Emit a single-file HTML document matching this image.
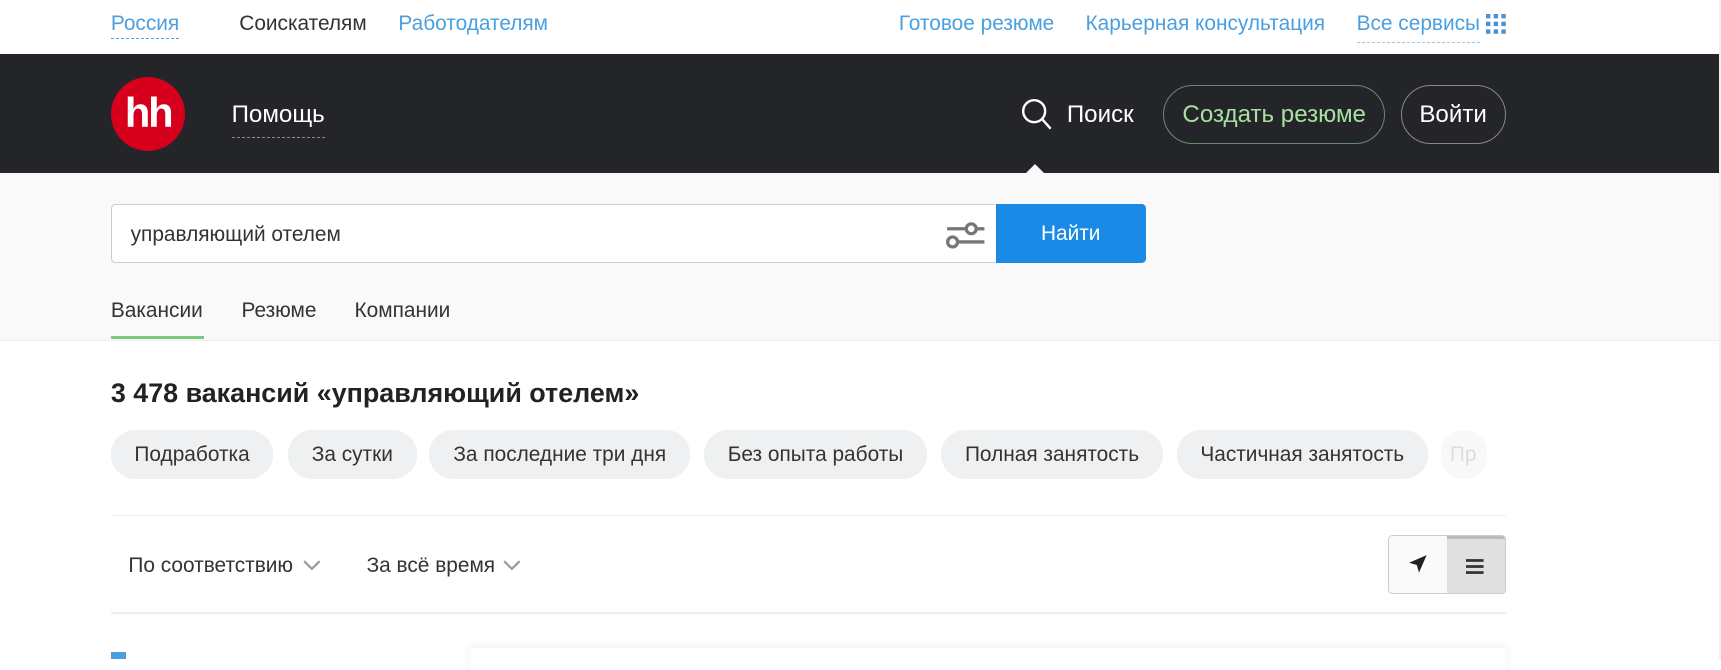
<!DOCTYPE html>
<html><head><meta charset="utf-8">
<style>
html,body{margin:0;padding:0;}
body{width:1568px;height:600px;overflow:hidden;zoom:1.09758;font-family:"Liberation Sans",Arial,sans-serif;background:#fff;position:relative;}
.a{position:absolute;white-space:nowrap;}
.top{font-size:19px;top:11px;}
.blue{color:#4a9fe0;}
.dash{border-bottom:1px dashed #4a9fe0;padding-bottom:3px;}
.hdr{position:absolute;left:0;top:49px;width:1566px;height:109px;background:#232529;}
.srch{position:absolute;left:0;top:158px;width:1566px;height:152px;background:#f9f9f9;border-bottom:1px solid #eee;}
.chip{position:absolute;top:392px;height:44px;line-height:45px;border-radius:22px;background:#eef0f2;font-size:19px;color:#333;text-align:center;}
.btn{position:absolute;top:77px;height:52px;border-radius:27px;font-size:22px;line-height:53px;text-align:center;}
</style></head><body>
<div class="a top blue" style="left:101px"><span class="dash">Россия</span></div>
<div class="a top" style="left:218px;color:#333">Соискателям</div>
<div class="a top blue" style="left:363px">Работодателям</div>
<div class="a top blue" style="left:819px">Готовое резюме</div>
<div class="a top blue" style="left:989px">Карьерная консультация</div>
<div class="a top blue" style="left:1236px"><span style="border-bottom:1px dashed #9cc4e8;padding-bottom:6px">Все сервисы</span></div>
<svg class="a" style="left:1354px;top:13px" width="18" height="18"><g fill="#4a8fd0"><rect x="0" y="0" width="4" height="4"/><rect x="7" y="0" width="4" height="4"/><rect x="14" y="0" width="4" height="4"/><rect x="0" y="7" width="4" height="4"/><rect x="7" y="7" width="4" height="4"/><rect x="14" y="7" width="4" height="4"/><rect x="0" y="14" width="4" height="4"/><rect x="7" y="14" width="4" height="4"/><rect x="14" y="14" width="4" height="4"/></g></svg>

<div class="hdr"></div>
<div class="a" style="left:101px;top:70px;width:68px;height:68px;border-radius:50%;background:#d6001c;color:#fff;font-weight:bold;font-size:38px;line-height:66px;text-align:center;letter-spacing:-2px">hh</div>
<div class="a" style="left:211px;top:92px;font-size:22px;color:#fff;"><span style="border-bottom:1px dashed #888;padding-bottom:8px">Помощь</span></div>
<svg class="a" style="left:930px;top:89px" width="30" height="32"><circle cx="12" cy="12" r="10" fill="none" stroke="#fff" stroke-width="2.2"/><line x1="19" y1="19" x2="27" y2="28" stroke="#fff" stroke-width="2.2"/></svg>
<div class="a" style="left:972px;top:92px;font-size:22px;color:#fff">Поиск</div>
<div class="btn" style="left:1060px;width:200px;border:1px solid #6b8a6b;color:#a7e0a0">Создать резюме</div>
<div class="btn" style="left:1276px;width:94px;border:1px solid #888;color:#fff">Войти</div>

<div class="srch"></div>
<div class="a" style="left:934px;top:149px;width:0;height:0;border-left:10px solid transparent;border-right:10px solid transparent;border-bottom:10px solid #f9f9f9"></div>
<div class="a" style="left:101px;top:186px;width:805px;height:52px;background:#fff;border:1px solid #ccc;border-right:none;border-radius:4px 0 0 4px"></div>
<div class="a" style="left:119px;top:203px;font-size:19px;color:#333">управляющий отелем</div>
<svg class="a" style="left:862px;top:200px" width="36" height="28"><g stroke="#777" stroke-width="3" fill="none"><line x1="1" y1="8" x2="18" y2="8"/><circle cx="23" cy="8" r="4.5"/><line x1="28" y1="8" x2="35" y2="8"/><circle cx="6" cy="20" r="4.5"/><line x1="11" y1="20" x2="35" y2="20"/></g></svg>
<div class="a" style="left:907px;top:186px;width:137px;height:54px;background:#1b8ae6;border-radius:0 4px 4px 0;color:#fff;font-size:19px;line-height:55px;text-align:center">Найти</div>
<div class="a" style="left:101px;top:272px;font-size:19px;color:#333">Вакансии</div>
<div class="a" style="left:101px;top:306px;width:85px;height:3px;background:#7cc97c"></div>
<div class="a" style="left:220px;top:272px;font-size:19px;color:#333">Резюме</div>
<div class="a" style="left:323px;top:272px;font-size:19px;color:#333">Компании</div>

<div class="a" style="left:101px;top:344px;font-size:24.5px;font-weight:bold;color:#222">3 478 вакансий «управляющий отелем»</div>
<div class="chip" style="left:101px;width:148px">Подработка</div>
<div class="chip" style="left:262px;width:118px">За сутки</div>
<div class="chip" style="left:391px;width:238px">За последние три дня</div>
<div class="chip" style="left:641px;width:204px">Без опыта работы</div>
<div class="chip" style="left:857px;width:203px">Полная занятость</div>
<div class="chip" style="left:1072px;width:229px">Частичная занятость</div>
<div class="chip" style="left:1313px;width:42px;background:#f8f8f9;color:#ddd;text-align:left;padding-left:8px;box-sizing:border-box;overflow:hidden">Пр</div>

<div class="a" style="left:101px;top:469px;width:1271px;height:1px;background:#eee"></div>
<div class="a" style="left:117px;top:505px;font-size:19px;color:#333">По соответствию</div>
<svg class="a" style="left:275px;top:509px" width="18" height="12"><polyline points="2,2 9,9 16,2" fill="none" stroke="#999" stroke-width="2"/></svg>
<div class="a" style="left:334px;top:505px;font-size:19px;color:#333">За всё время</div>
<svg class="a" style="left:457px;top:509px" width="18" height="12"><polyline points="2,2 9,9 16,2" fill="none" stroke="#999" stroke-width="2"/></svg>
<div class="a" style="left:1265px;top:487px;width:105px;height:52px;border:1px solid #ccc;border-radius:4px;overflow:hidden;background:#fafafa">
  <div style="position:absolute;left:52px;top:0;width:53px;height:52px;background:#e0e0e0;border-top:3px solid #bbb;box-sizing:border-box"></div>
</div>
<svg class="a" style="left:1283px;top:505px" width="18" height="18"><polygon points="17,1 1,8 8,10 10,17" fill="#222"/></svg>
<svg class="a" style="left:1336px;top:508px" width="18" height="16"><g fill="#333"><rect x="0" y="1" width="16" height="2.5"/><rect x="0" y="6.5" width="16" height="2.5"/><rect x="0" y="12" width="16" height="2.5"/></g></svg>
<div class="a" style="left:101px;top:558px;width:1271px;height:1px;background:#eee"></div>
<div class="a" style="left:101px;top:594px;width:14px;height:6px;background:#4a9fe0"></div>
<div class="a" style="left:428px;top:590px;width:944px;height:20px;background:#fff;box-shadow:0 -2px 8px rgba(0,0,0,0.06)"></div>
<div class="a" style="left:1566px;top:0;width:2px;height:600px;background:#f0f0f0"></div>
</body></html>
